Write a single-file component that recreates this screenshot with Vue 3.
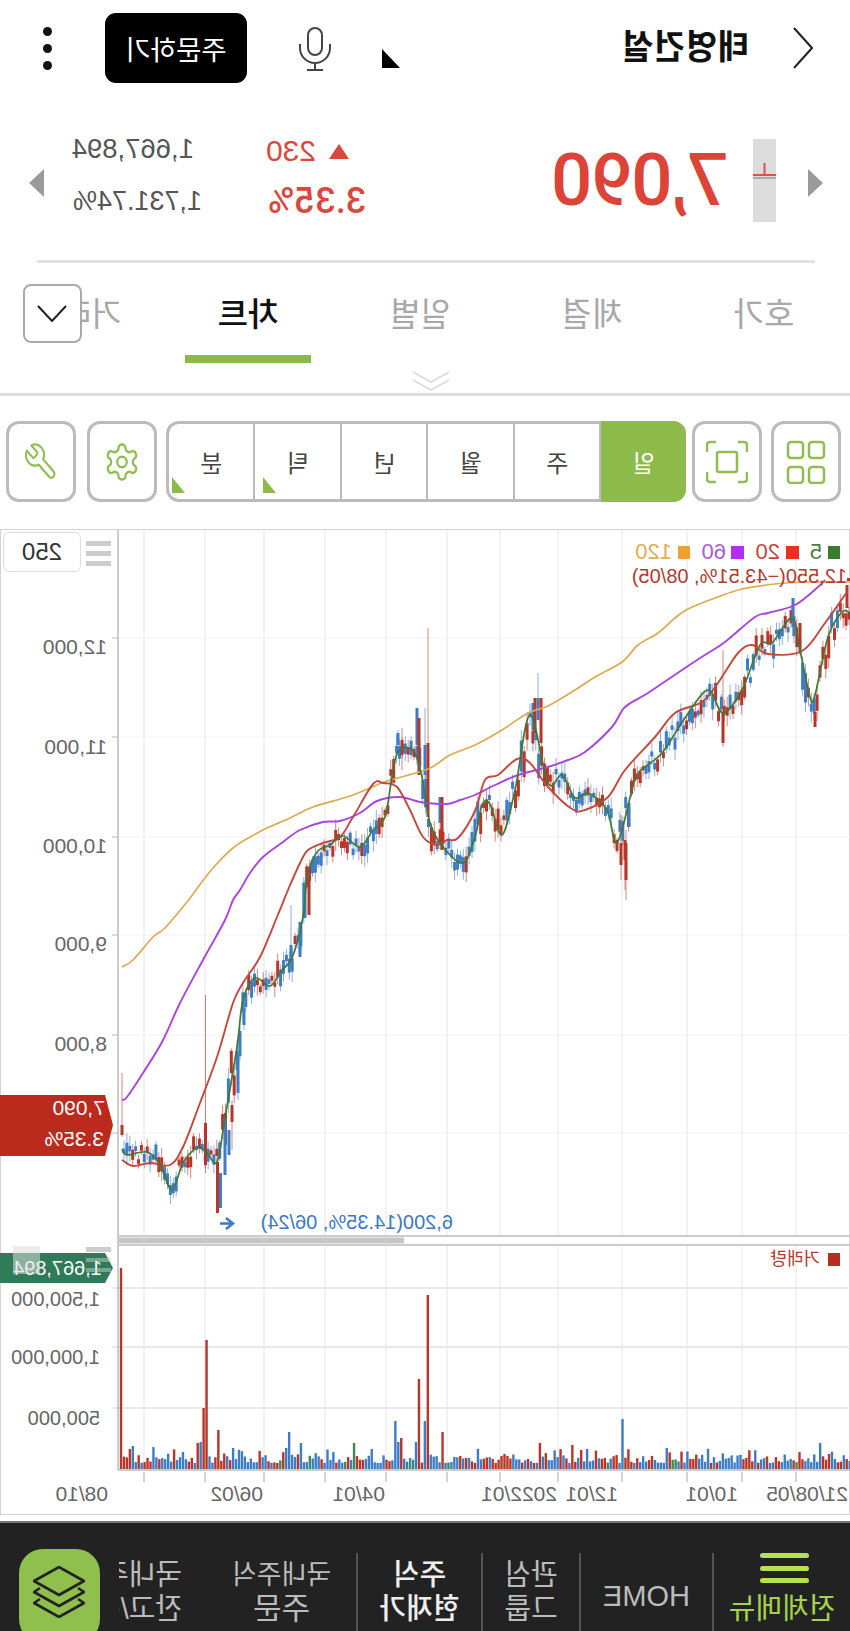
<script setup>
const orange = [[122,967],[133,960],[153,937],[165,928],[187,902],[196,890],[213,868],[233,848],[250,837],[267,828],[290,818],[313,807],[347,797],[370,788],[387,781],[428,769],[450,755],[475,745],[502,730],[528,713],[548,706],[575,690],[595,677],[622,662],[638,645],[658,633],[675,618],[688,609],[715,598],[742,589],[775,584],[808,582],[850,582]]
const purple = [[122,1100],[127,1097],[143,1073],[162,1042],[180,1003],[203,960],[225,920],[233,900],[240,890],[250,873],[263,857],[283,842],[300,830],[323,822],[340,821],[360,813],[377,801],[400,797],[420,802],[447,804],[460,800],[475,795],[495,785],[518,775],[548,767],[568,760],[585,752],[612,727],[625,707],[648,693],[685,668],[708,653],[725,642],[755,617],[768,613],[795,605],[818,587],[825,580]]
const red = [[122,1160],[133,1166],[150,1163],[170,1165],[183,1147],[200,1103],[217,1057],[233,1003],[243,983],[260,957],[277,917],[288,890],[300,863],[308,850],[323,843],[340,837],[353,817],[373,784],[383,783],[397,787],[410,810],[423,837],[437,845],[447,840],[458,838],[475,811],[485,780],[498,775],[517,759],[530,763],[548,787],[572,809],[585,810],[608,797],[625,770],[655,737],[675,713],[702,702],[718,683],[738,653],[752,645],[768,654],[802,651],[825,623],[847,592]]
const green = [[122,1149],[127,1155],[147,1152],[160,1165],[172,1190],[183,1163],[197,1148],[207,1153],[217,1162],[225,1118],[237,1047],[243,1000],[255,978],[270,986],[282,970],[292,958],[303,917],[307,877],[317,852],[330,845],[343,836],[360,847],[373,830],[385,817],[392,777],[398,752],[413,750],[422,777],[430,823],[443,847],[463,863],[475,837],[482,805],[490,804],[502,835],[515,790],[530,715],[548,783],[562,775],[575,798],[588,793],[607,810],[617,843],[632,790],[638,773],[662,753],[685,718],[708,690],[723,713],[742,690],[760,645],[772,643],[792,618],[800,650],[810,697],[815,695],[828,637],[842,612],[850,613]]

function smooth(a) {
  let d = `M${a[0][0]} ${a[0][1]}`
  for (let i = 0; i < a.length - 1; i++) {
    const p0 = a[i - 1] || a[i]
    const p1 = a[i]
    const p2 = a[i + 1]
    const p3 = a[i + 2] || p2
    const c1x = p1[0] + (p2[0] - p0[0]) / 6
    const c1y = p1[1] + (p2[1] - p0[1]) / 6
    const c2x = p2[0] - (p3[0] - p1[0]) / 6
    const c2y = p2[1] - (p3[1] - p1[1]) / 6
    d += `C${c1x.toFixed(1)} ${c1y.toFixed(1)} ${c2x.toFixed(1)} ${c2y.toFixed(1)} ${p2[0]} ${p2[1]}`
  }
  return d
}
const lines = [
  { c: '#e0a94e', w: 1.7, d: smooth(orange) },
  { c: '#a944e0', w: 1.9, d: smooth(purple) },
  { c: '#c4483e', w: 1.9, d: smooth(red) },
  { c: '#3f7a35', w: 1.7, d: smooth(green) }
]

function rng(seed) {
  let s = seed
  return () => {
    s = (s + 0x6d2b79f5) | 0
    let t = Math.imul(s ^ (s >>> 15), 1 | s)
    t = (t + Math.imul(t ^ (t >>> 7), 61 | t)) ^ t
    return ((t ^ (t >>> 14)) >>> 0) / 4294967296
  }
}
function interp(a, x) {
  for (let i = 1; i < a.length; i++) {
    if (x <= a[i][0]) {
      const [x0, y0] = a[i - 1]
      const [x1, y1] = a[i]
      return y0 + ((y1 - y0) * (x - x0)) / (x1 - x0)
    }
  }
  return a[a.length - 1][1]
}
const BLUE = '#3f7cc6'
const RED = '#b8352a'
const r = rng(77)
const candles = []
for (let x = 124; x < 850; x += 2.9) {
  const g = interp(green, x)
  const slope = Math.abs(interp(green, x + 4) - interp(green, x - 4))
  const c = g + (r() - 0.45) * (15 + slope * 0.6)
  const h = 4 + r() * (8 + slope * 0.5)
  const wick = 2 + r() * 9
  candles.push({ x, wt: c - h / 2 - wick, wb: c + h / 2 + wick, bt: c - h / 2, bb: c + h / 2, col: r() > 0.42 ? BLUE : RED })
}
const big = [
  [122,1073,1137,1125,1135,RED],[205.5,995,1173,1123,1165,RED],[217.5,1162,1213,1162,1213,RED],[220.5,1173,1208,1173,1208,BLUE],
  [225,1118,1175,1118,1175,BLUE],[229,1130,1155,1130,1155,BLUE],[232,1100,1150,1105,1122,RED],[238,1035,1100,1055,1093,BLUE],
  [244,1000,1030,1008,1025,BLUE],[291,905,960,945,960,BLUE],[300,922,957,922,957,BLUE],[305,880,918,885,918,BLUE],[309,880,915,880,915,RED],
  [398,730,756,733,745,BLUE],[402,728,770,740,755,RED],[417,708,745,708,745,BLUE],[419,718,775,718,775,RED],[425,708,780,745,775,BLUE],
  [428,628,817,743,817,RED],[440,797,823,797,823,BLUE],[442,797,850,797,850,RED],[533,703,730,703,730,BLUE],[535,698,733,698,733,RED],
  [538,673,720,698,720,BLUE],[541,698,743,698,743,RED],[723,650,747,713,743,RED],[815,712,727,712,727,RED],[793,598,627,598,627,BLUE],
  [800,623,653,623,653,RED],[847,585,608,585,608,RED],[621,815,880,843,865,RED],[626,830,900,843,880,RED],[625,840,890,840,860,RED],[629,803,827,803,827,BLUE]
]
big.forEach(([x, wt, wb, bt, bb, col]) => candles.push({ x, wt, wb, bt, bb, col }))

const r2 = rng(19)
const heavy = [[121,1268,RED],[206,1340,RED],[203,1408,RED],[218,1430,RED],[428,1295,RED],[418,1379,RED],[424,1421,BLUE],[396,1421,BLUE],[442,1432,RED],[623,1419,BLUE],[355,1443,'#3c8a55'],[290,1432,BLUE],[302,1443,BLUE],[541,1443,RED],[573,1445,RED],[821,1443,BLUE],[800,1452,RED],[588,1449,BLUE],[372,1449,BLUE],[401,1438,RED],[398,1442,BLUE],[416,1442,BLUE],[197,1443,RED],[200,1442,BLUE],[129,1449,RED],[133,1446,BLUE],[183,1452,BLUE]]
const vols = []
for (let x = 121; x < 850; x += 2.95) {
  const v = r2()
  const col = v < 0.58 ? BLUE : v < 0.95 ? RED : '#3c8a55'
  let top = 1469 - (6 + r2() * r2() * 20)
  let c = col
  const hit = heavy.find((h) => Math.abs(h[0] - x) < 1.5)
  if (hit) { top = hit[1]; c = hit[2] }
  vols.push({ x, top, c })
}
const gridX = [144,205,264,325,386,447,500,558,622,687,742,796]
const priceY = [638,737,837,935,1035,1133]
const volY = [1288,1347,1408]
const priceLabels = [['12,000',654],['11,000',754],['10,000',853],['9,000',951],['8,000',1051]]
const volLabels = [['1,500,000',1306],['1,000,000',1364],['500,000',1425]]
const xLabels = [['08/10',742],['06/02',587],['04/01',465],['2022/01',293],['12/01',232],['10/01',112],['21/08/05',2]]
const segs = [['일',true,false],['주',false,false],['월',false,false],['년',false,false],['틱',false,true],['분',false,true]]
const tabs = ['호가','체결','일별','차트','거래원']
</script>

<template>
  <div class="screen">
    <header class="top">
      <svg class="back" width="20" height="42" viewBox="0 0 20 42"><path d="M19 1 1 21l18 20" fill="none" stroke="#222" stroke-width="2"/></svg>
      <h1 class="name">태영건설</h1>
      <span class="corner"></span>
      <svg class="mic" width="34" height="44" viewBox="0 0 34 44" fill="none" stroke="#444" stroke-width="2">
        <rect x="10" y="1" width="14" height="27" rx="7"/>
        <path d="M2 17v4a15 15 0 0 0 30 0v-4M17 36v7M9 43h16"/>
      </svg>
      <button class="order">주문하기</button>
      <div class="dots"><i></i><i></i><i></i></div>
    </header>

    <section class="quote">
      <span class="arr arr-l"></span>
      <div class="limit"><svg width="23" height="83" viewBox="0 0 23 83"><path d="M0 36h23" stroke="#d9534a" stroke-width="2"/><path d="M11.500 24v12" stroke="#d9534a" stroke-width="2"/><path d="M0 39h23" stroke="#aaa" stroke-width="2"/></svg></div>
      <div class="price">7,090</div>
      <div class="chg">
        <div class="up"><span class="tri"></span><span>230</span></div>
        <div class="pct">3.35%</div>
      </div>
      <div class="vol">
        <div>1,667,894</div>
        <div class="v2">1,731.74%</div>
      </div>
      <span class="arr arr-r"></span>
    </section>

    <nav class="tabs">
      <div v-for="t in tabs" :key="t" class="tab" :class="{ on: t === '차트' }">{{ t }}<span v-if="t === '차트'" class="bar"></span></div>
      <div class="more">
        <svg width="30" height="17" viewBox="0 0 30 17"><path d="M1 1l14 15L29 1" fill="none" stroke="#222" stroke-width="2"/></svg>
      </div>
      <svg class="dbl" width="38" height="20" viewBox="0 0 38 20" fill="none" stroke="#ddd" stroke-width="2"><path d="M1 1l18 10L37 1M1 9l18 10L37 9"/></svg>
    </nav>

    <div class="tools">
      <div class="ib">
        <svg width="40" height="44" viewBox="0 0 40 44" fill="none" stroke="#8fbd50" stroke-width="2.500">
          <rect x="2" y="2" width="15" height="16" rx="3"/><rect x="23" y="2" width="15" height="16" rx="3"/>
          <rect x="2" y="27" width="15" height="16" rx="3"/><rect x="23" y="27" width="15" height="16" rx="3"/>
        </svg>
      </div>
      <div class="ib">
        <svg width="42" height="44" viewBox="0 0 42 44" fill="none" stroke="#8fbd50" stroke-width="2.500">
          <path d="M1 12V5q0-3 3-3h6M32 2h6q3 0 3 3v7M41 32v7q0 3-3 3h-6M10 42H4q-3 0-3-3v-7"/>
          <rect x="11" y="12" width="20" height="20" rx="2"/>
        </svg>
      </div>
      <div class="seg">
        <div v-for="s in segs" :key="s[0]" class="cell" :class="{ act: s[1] }">{{ s[0] }}<span v-if="s[2]" class="mark"></span></div>
      </div>
      <div class="ib">
        <svg width="38" height="42" viewBox="0 0 24 24" fill="none" stroke="#8fbd50" stroke-width="1.400" stroke-linejoin="round" preserveAspectRatio="none">
          <path d="M12.22 2h-.44a2 2 0 0 0-2 2v.18a2 2 0 0 1-1 1.730l-.43.25a2 2 0 0 1-2 0l-.15-.08a2 2 0 0 0-2.730.73l-.22.38a2 2 0 0 0 .73 2.730l.15.1a2 2 0 0 1 1 1.720v.51a2 2 0 0 1-1 1.740l-.15.09a2 2 0 0 0-.73 2.730l.22.38a2 2 0 0 0 2.730.73l.15-.08a2 2 0 0 1 2 0l.43.25a2 2 0 0 1 1 1.730V20a2 2 0 0 0 2 2h.44a2 2 0 0 0 2-2v-.18a2 2 0 0 1 1-1.730l.43-.25a2 2 0 0 1 2 0l.15.08a2 2 0 0 0 2.730-.73l.22-.39a2 2 0 0 0-.73-2.730l-.15-.08a2 2 0 0 1-1-1.740v-.5a2 2 0 0 1 1-1.740l.15-.09a2 2 0 0 0 .73-2.730l-.22-.38a2 2 0 0 0-2.730-.73l-.15.08a2 2 0 0 1-2 0l-.43-.25a2 2 0 0 1-1-1.730V4a2 2 0 0 0-2-2z"/>
          <circle cx="12" cy="12" r="3"/>
        </svg>
      </div>
      <div class="ib last">
        <svg width="36" height="42" viewBox="0 0 24 24" fill="none" stroke="#8fbd50" stroke-width="1.300" stroke-linejoin="round" preserveAspectRatio="none">
          <path d="M14.700 6.300a1 1 0 0 0 0 1.400l1.600 1.600a1 1 0 0 0 1.400 0l3.770-3.770a6 6 0 0 1-7.940 7.940l-6.910 6.910a2.120 2.120 0 0 1-3-3l6.910-6.910a6 6 0 0 1 7.940-7.940l-3.760 3.760z"/>
        </svg>
      </div>
    </div>

    <div class="chart">
      <svg class="plot" width="850" height="987" viewBox="0 529 850 987">
        <g transform="matrix(-1 0 0 1 850 0)">
          <rect x="0.500" y="529.500" width="849" height="985" fill="#fff" stroke="#d4d4d4"/>
          <line v-for="y in priceY" :key="'h' + y" x1="118" :y1="y" x2="850" :y2="y" stroke="#f1f1f1"/>
          <line v-for="y in priceY" :key="'t' + y" x1="112" :y1="y" x2="118" :y2="y" stroke="#bbb"/>
          <line v-for="x in gridX" :key="'v' + x" :x1="x" y1="530" :x2="x" y2="1236" stroke="#eee" stroke-width="1.500"/>
          <line v-for="x in gridX" :key="'u' + x" :x1="x" y1="1246" :x2="x" y2="1469" stroke="#eee" stroke-width="1.500"/>
          <line v-for="x in gridX" :key="'k' + x" :x1="x" y1="1472" :x2="x" y2="1482" stroke="#aaa"/>
          <line v-for="y in volY" :key="'w' + y" x1="112" :y1="y" x2="850" :y2="y" stroke="#e9e9e9" stroke-width="2"/>
          <line x1="118" y1="530" x2="118" y2="1470" stroke="#bbb" stroke-width="1.500"/>
          <line x1="118" y1="1470" x2="850" y2="1470" stroke="#bbb" stroke-width="1.500"/>
          <g v-for="(c, i) in candles" :key="'c' + i">
            <line :x1="c.x" :y1="c.wt" :x2="c.x" :y2="c.wb" :stroke="c.col" stroke-opacity=".6"/>
            <rect :x="c.x - 1.5" :y="c.bt" width="3" :height="c.bb - c.bt" :fill="c.col"/>
          </g>
          <path v-for="l in lines" :key="l.c" :d="l.d" fill="none" :stroke="l.c" :stroke-width="l.w" stroke-linejoin="round"/>
          <rect v-for="(v, i) in vols" :key="'b' + i" :x="v.x - 1.2" :y="v.top" width="2.400" :height="1469 - v.top" :fill="v.c"/>
          <line x1="118" y1="1236" x2="850" y2="1236" stroke="#ccc" stroke-width="2"/>
          <line x1="118" y1="1245" x2="850" y2="1245" stroke="#ccc" stroke-width="2"/>
          <rect x="119" y="1237.500" width="285" height="6" fill="#c6c6c6"/>
          <path d="M0 1095h105l8 30-8 31H0z" fill="#bb2a1c"/>
          <path d="M0 1253h105l8 15-8 15H0z" fill="#2f7a59"/>
          <rect x="3.500" y="532.500" width="77" height="39" rx="6" fill="#fff" stroke="#ddd"/>
          <rect x="86" y="541" width="25" height="5" fill="#ccc"/>
          <rect x="86" y="551" width="25" height="5" fill="#ccc"/>
          <rect x="86" y="561" width="25" height="5" fill="#ccc"/>
          <rect x="828" y="546" width="12" height="13" fill="#3c7a2e"/>
          <rect x="786" y="546" width="13" height="13" fill="#ee2e24"/>
          <rect x="731" y="546" width="13" height="13" fill="#b52df5"/>
          <rect x="678" y="546" width="12" height="13" fill="#f0a030"/>
          <rect x="828" y="1253" width="12" height="13" fill="#b92c20"/>
          <rect x="847" y="578" width="3" height="3" fill="#b33a2e"/>
          <path d="M233 1223.500h-13M226 1218l7 5.500-7 5.500" fill="none" stroke="#3d78c4" stroke-width="2.500"/>
        </g>
        <g class="t">
          <text v-for="p in priceLabels" :key="p[0]" x="743" :y="p[1]" class="ax">{{ p[0] }}</text>
          <text v-for="p in volLabels" :key="p[0]" x="750" :y="p[1]" class="ax vl">{{ p[0] }}</text>
          <text v-for="p in xLabels" :key="p[0]" :x="p[1]" y="1501" class="ax">{{ p[0] }}</text>
          <text x="788" y="560" class="cnt">250</text>
          <text x="28" y="559" class="lg" fill="#4f7a42">5</text>
          <text x="70" y="559" class="lg" fill="#c0483e">20</text>
          <text x="124" y="559" class="lg" fill="#a95ad8">60</text>
          <text x="178" y="559" class="lg" fill="#e0ad58">120</text>
          <text x="3" y="583" class="hi">12,550(−43.51%, 08/05)</text>
          <text x="397" y="1229" class="lo">6,200(14.35%, 06/24)</text>
          <text x="30" y="1265" class="vn">거래량</text>
          <text x="745" y="1115" class="tg">7,090</text>
          <text x="746" y="1146" class="tg">3.35%</text>
          <text x="748" y="1275" class="tg vt">1,667,894</text>
        </g>
        <g transform="matrix(-1 0 0 1 850 0)">
          <rect x="13" y="1246" width="27" height="28" fill="#ddd" fill-opacity=".55"/>
          <rect x="86" y="1247" width="25" height="5" fill="#ccc"/>
          <rect x="86" y="1258" width="25" height="4" fill="#ccc" fill-opacity=".5"/>
          <rect x="86" y="1268" width="25" height="4" fill="#ccc" fill-opacity=".5"/>
        </g>
      </svg>
    </div>

    <footer class="dock">
      <div class="item menu w1">
        <div class="burger"><i></i><i></i><i></i></div>
        <span>전체메뉴</span>
      </div>
      <div class="item home w2"><span>HOME</span></div>
      <div class="item w3"><span>관심</span><span>그룹</span></div>
      <div class="item cur w4"><span>주식</span><span>현재가</span></div>
      <div class="item w5"><span class="dom">국내주식</span><span class="wide">주문</span></div>
      <div class="item clip"><span>국내주식</span><span>잔고/손익</span></div>
      <div class="fab">
        <svg width="52" height="52" viewBox="0 0 52 52" fill="none" stroke="#222" stroke-width="2.600" stroke-linejoin="round">
          <path d="M26 1 51 15 26 29 1 15z"/>
          <path d="M7 22 1 26l25 14 25-14-6-4"/>
          <path d="M7 33 1 37l25 14 25-14-6-4"/>
        </svg>
      </div>
    </footer>
  </div>
</template>

<style>
html, body { margin: 0; background: #fff; }
</style>

<style scoped>
.screen {
  width: 850px; height: 1631px; overflow: hidden; position: relative; background: #fff;
  transform: scaleX(-1);
  font-family: "Liberation Sans", "Noto Sans CJK KR", sans-serif;
}
.top { height: 100px; display: flex; align-items: flex-start; position: relative; }
.back { margin: 27px 0 0 37px; }
.name { margin: 26px 0 0 44px; font-size: 34.500px; line-height: 42px; font-weight: 700; color: #111; white-space: nowrap; }
.corner { position: absolute; left: 450px; top: 49px; width: 0; height: 0; border-top: 19px solid transparent; border-right: 18px solid #000; }
.mic { position: absolute; left: 518px; top: 27px; }
.order { position: absolute; left: 603px; top: 13px; width: 142px; height: 70px; border: 0; border-radius: 11px; background: #000; color: #fff; font: inherit; font-size: 27.500px; padding: 0; }
.dots { position: absolute; left: 798px; top: 27px; display: flex; flex-direction: column; gap: 8px; }
.dots i { width: 9px; height: 9px; border-radius: 50%; background: #111; display: block; }

.quote { height: 160px; margin: 0 37px 0 35px; border-bottom: 3px solid #e2e2e2; position: relative; box-sizing: content-box; display: flex; }
.arr { position: absolute; top: 69px; width: 0; height: 0; border-top: 14px solid transparent; border-bottom: 14px solid transparent; }
.arr-l { left: -8px; border-right: 15px solid #9a9a9a; }
.arr-r { left: 771px; border-left: 15px solid #9a9a9a; }
.limit { position: absolute; left: 39px; top: 39px; width: 23px; height: 83px; background: #dcdcdc; }
.price { position: absolute; left: 87px; top: 38px; font-family: Roboto, sans-serif; font-size: 72.500px; line-height: 85px; font-weight: 500; letter-spacing: -1px; color: #dc4437; }
.chg { position: absolute; left: 449px; top: 33px; color: #d9483c; }
.up { display: flex; align-items: center; gap: 13px; padding-left: 17px; font-size: 30px; line-height: 36px; }
.tri { width: 0; height: 0; border-left: 10px solid transparent; border-right: 10px solid transparent; border-bottom: 15px solid #d9483c; }
.pct { font-family: Roboto, sans-serif; font-size: 36px; line-height: 42px; font-weight: 500; margin-top: 11px; }
.vol { position: absolute; left: 621px; top: 33px; font-size: 27.500px; line-height: 32px; color: #555; white-space: nowrap; }
.v2 { margin-top: 20px; margin-left: -8px; font-size: 27px; }

.tabs { height: 130px; display: flex; position: relative; border-bottom: 3px solid #dedede; box-sizing: content-box; }
.tab { flex: 0 0 172px; text-align: center; font-size: 33px; line-height: 40px; padding-top: 32px; color: #a8a8a8; position: relative; white-space: nowrap; }
.tab.on { color: #111; font-weight: 500; }
.bar { position: absolute; left: 23px; top: 92px; width: 126px; height: 8px; background: #8db84b; }
.more { position: absolute; left: 768px; top: 21px; width: 55px; height: 55px; border: 2px solid #aaa; border-radius: 8px; background: #fff; display: flex; align-items: center; justify-content: center; box-shadow: 6px 0 8px #fff; z-index: 1; }
.tabs .tab:last-of-type { overflow: hidden; }
.dbl { position: absolute; left: 400px; top: 108px; }

.tools { height: 133px; padding: 25px 9px 0; box-sizing: border-box; display: flex; gap: 9px; }
.ib { box-sizing: border-box; height: 81px; border: 3px solid #bbb; border-radius: 13px; display: flex; align-items: center; justify-content: center; flex: 0 0 70px; background: #fff; }
.last { margin-left: 2px; }
.seg { flex: 0 0 520px; height: 81px; margin-left: -3px; box-sizing: border-box; border: 3px solid #bbb; border-radius: 13px; display: flex; }
.cell { flex: 1; display: flex; align-items: center; justify-content: center; position: relative; font-size: 24px; color: #444; border-left: 2px solid #bbb; }
.cell:first-child { border-left: 0; }
.cell.act { background: #8dbb4b; color: #fff; margin: -3px 0 -3px -3px; border-radius: 13px 0 0 13px; }
.mark { position: absolute; right: 3px; bottom: 6px; width: 0; height: 0; border-left: 13px solid transparent; border-bottom: 16px solid #8dbb4b; }
.cell:nth-child(5) .mark { right: 8px; }

.chart { height: 987px; }
.plot { display: block; }
.t text { font-family: "Liberation Sans", "Noto Sans CJK KR", sans-serif; }
.ax { font-size: 21px; fill: #666; }
.ax.vl { font-size: 20px; }
.cnt { font-size: 24px; fill: #333; }
.lg { font-size: 22px; }
.hi { font-size: 20px; fill: #b33a2e; }
.lo { font-size: 20px; fill: #3d78c4; }
.vn { font-size: 18px; fill: #b33a2e; }
.tg { font-size: 21px; fill: #fff; }
.tg.vt { font-size: 20px; }

.dock { position: absolute; left: 0; right: 0; bottom: 0; height: 110px; background: #222; border-top: 2px solid #777; box-sizing: border-box; display: flex; align-items: flex-start; padding-top: 30px; }
.item { flex: 0 0 auto; box-sizing: border-box; height: 78px; display: flex; flex-direction: column; align-items: center; justify-content: flex-end; font-size: 29px; line-height: 34px; color: #bbb; border-left: 2px solid #555; white-space: nowrap; padding-bottom: 5px; }
.item:first-child { border-left: 0; }
.w1 { flex-basis: 136px; }
.w2 { flex-basis: 133px; }
.w3 { flex-basis: 98px; }
.w4 { flex-basis: 125px; }
.w5 { flex-basis: 151px; }
.dom { font-size: 27px; }
.wide { font-size: 31px; }
.home { justify-content: center; padding: 7px 0 0; }
.cur { color: #eee; font-weight: 500; }
.menu { color: #a5d24c; position: relative; }
.burger { position: absolute; top: 0; left: 41px; display: flex; flex-direction: column; gap: 7.500px; }
.burger i { display: block; width: 49px; height: 5px; border-radius: 3px; background: #b5e24f; }
.clip { width: 63px; overflow: hidden; margin-left: 25px; border-left: 0; align-items: flex-start; }
.fab { position: absolute; left: 750px; top: 26px; width: 81px; height: 94px; border-radius: 24px; background: #8fbf4c; display: flex; align-items: flex-start; justify-content: center; padding-top: 17px; box-sizing: border-box; }
</style>
